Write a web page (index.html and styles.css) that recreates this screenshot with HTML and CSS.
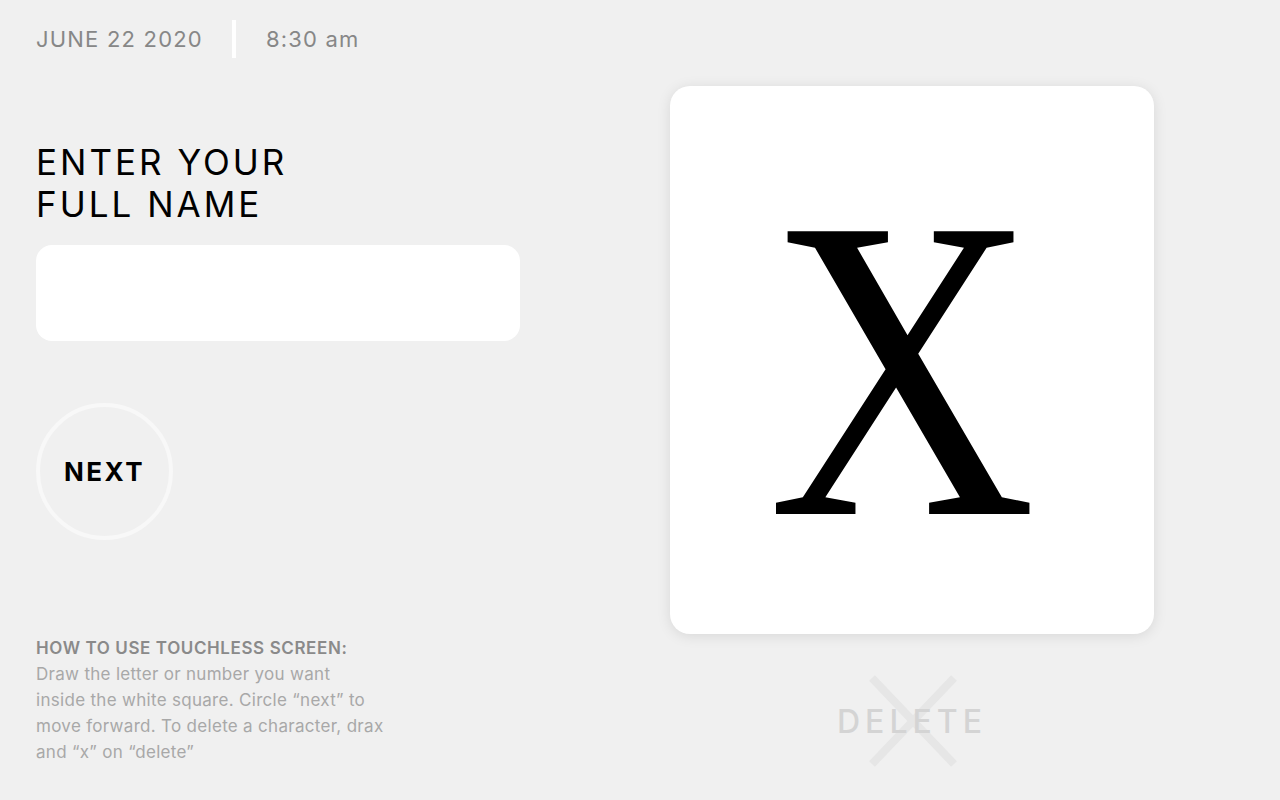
FILE: index.html
```html
<!DOCTYPE html>
<html lang="en">
<head>
    <meta charset="UTF-8">
    <meta name="viewport" content="width=device-width, initial-scale=1.0">
    <link rel="stylesheet" href="styles.css">
</head>
<body>
    <div class="screen">
        <div class="left">
            <div class="topbar">
                <span class="date">JUNE 22 2020</span>
                <span class="divider"></span>
                <span class="time">8:30 am</span>
            </div>

            <h1 class="title">ENTER YOUR<br>FULL NAME</h1>
            <div class="name-field"></div>

            <div class="next">NEXT</div>

            <div class="help">
                <div class="help-title">HOW TO USE TOUCHLESS SCREEN:</div>
                <p>Draw the letter or number you want<br>inside the white square. Circle “next” to<br>move forward. To delete a character, drax<br>and “x” on “delete”</p>
            </div>
        </div>

        <div class="right">
            <div class="pad">
                <span class="letter">X</span>
            </div>
            <div class="delete">
                <svg class="delete-x" width="90" height="94" viewBox="0 0 90 94">
                    <line x1="4" y1="4" x2="86" y2="90" stroke="#e6e6e6" stroke-width="8" />
                    <line x1="86" y1="4" x2="4" y2="90" stroke="#e6e6e6" stroke-width="8" />
                </svg>
                <span class="delete-label">DELETE</span>
            </div>
        </div>
    </div>
</body>
</html>
```

FILE: styles.css
```css
body {
    margin: 0;
    background-color: #f0f0f0;
    font-family: Inter, "Open Sans", sans-serif;
}

.screen {
    display: flex;
    gap: 150px;
    padding: 20px 36px 0;
    height: 780px;
}

.left {
    width: 484px;
}

.topbar {
    display: flex;
    align-items: center;
    height: 38px;
    color: #878787;
    font-size: 22px;
    letter-spacing: 1.2px;
}

.divider {
    width: 4px;
    height: 38px;
    background-color: #fff;
    margin: 0 30px 0 29px;
}

.title {
    margin: 83px 0 0;
    font-size: 35px;
    font-weight: 400;
    line-height: 42px;
    letter-spacing: 3px;
    color: #000;
}

.name-field {
    margin-top: 20px;
    height: 96px;
    background-color: #fff;
    border-radius: 16px;
}

.next {
    display: flex;
    align-items: center;
    justify-content: center;
    margin-top: 62px;
    width: 129px;
    height: 129px;
    border: 4px solid #f8f8f8;
    border-radius: 50%;
    font-size: 26px;
    font-weight: 700;
    letter-spacing: 2.5px;
}

.help {
    margin-top: 95px;
    font-size: 17px;
    line-height: 26px;
    color: #a8a8a8;
    letter-spacing: 0.3px;
}

.help-title {
    font-weight: 600;
    color: #8a8a8a;
    letter-spacing: 0.6px;
}

.help p {
    margin: 0;
}

.right {
    width: 484px;
}

.pad {
    display: flex;
    align-items: center;
    justify-content: center;
    margin-top: 66px;
    height: 548px;
    background-color: #fff;
    border-radius: 20px;
    box-shadow: 0 2px 14px rgba(0, 0, 0, 0.1);
}

.letter {
    font-family: "Liberation Serif", serif;
    font-size: 432px;
    line-height: 1;
    transform: scaleX(0.86);
    margin: 16px 0 0 -20px;
}

.delete {
    position: relative;
    display: flex;
    align-items: center;
    justify-content: center;
    margin-top: 40px;
    height: 94px;
}

.delete-x {
    position: absolute;
    left: 198px;
    top: 0;
}

.delete-label {
    position: relative;
    font-size: 32px;
    font-weight: 500;
    letter-spacing: 5px;
    margin-right: 0;
    color: #d4d4d4;
}
```
